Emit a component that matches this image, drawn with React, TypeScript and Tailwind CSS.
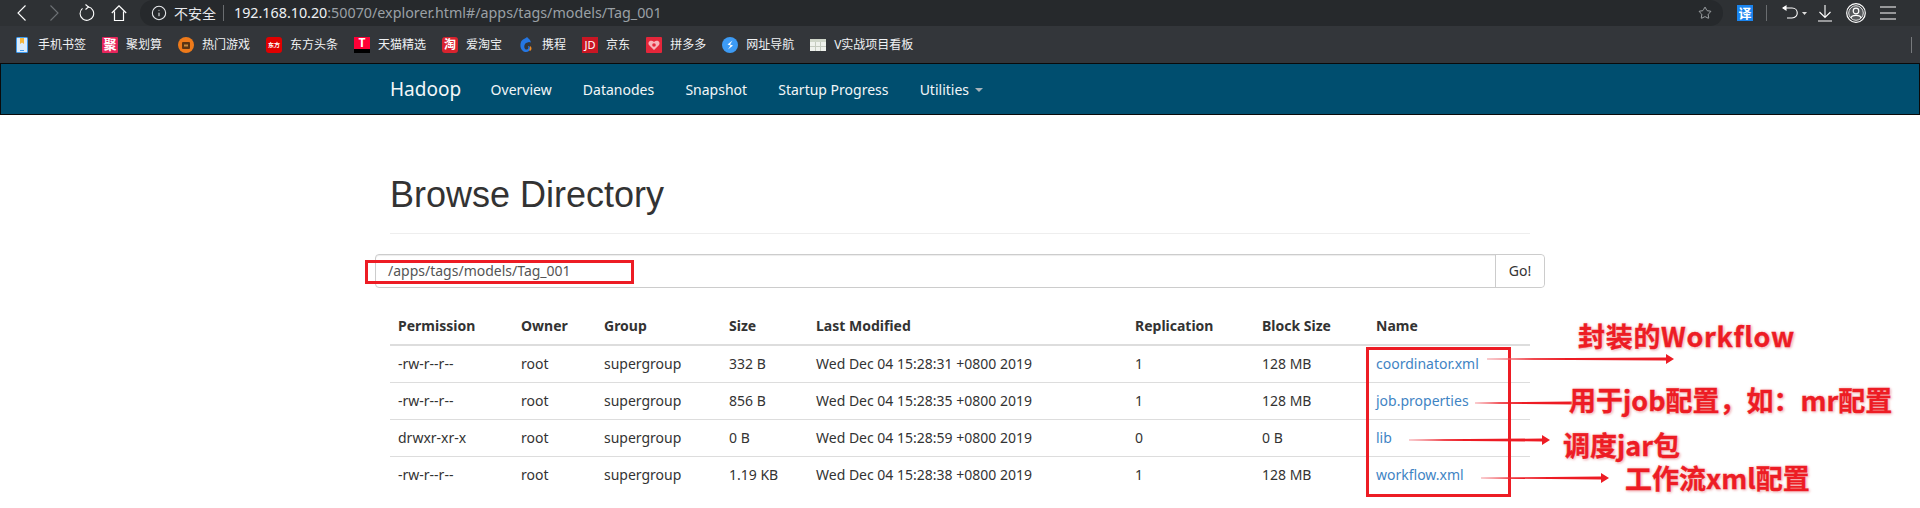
import React from 'react';
import { Star, Info } from 'lucide-react';

const FONT = 'font-["Noto_Sans","Noto_Sans_CJK_SC",sans-serif]';

const BookmarkIcon: React.FC<{ name: string }> = ({ name }) => {
  switch (name) {
    case 'phone':
      return (
        <svg width="16" height="16" viewBox="0 0 16 16">
          <rect x="2" y="0" width="12" height="16" rx="1.5" fill="#3f9bf0" />
          <rect x="3" y="1" width="10" height="14" fill="#dcebfa" />
          <path d="M6 1h4v6l-2-1.5L6 7z" fill="#f5b53a" />
          <rect x="6" y="13" width="4" height="1" fill="#3f9bf0" />
        </svg>
      );
    case 'ju':
      return <span className="flex h-4 w-4 items-center justify-center rounded-[1px] bg-[#e8255c] text-[13px] leading-none font-bold text-white">聚</span>;
    case 'game':
      return (
        <svg width="16" height="16" viewBox="0 0 16 16">
          <circle cx="8" cy="8" r="8" fill="#ee7a1a" />
          <rect x="4" y="5" width="8" height="7" rx="1" fill="#5a3413" />
          <rect x="6" y="7.5" width="4" height="2" fill="#c98a3c" />
        </svg>
      );
    case 'dongfang':
      return <span className="flex h-4 w-4 items-center justify-center rounded-[3px] bg-[#e00000] text-[6px] leading-none font-bold text-white">东方</span>;
    case 'tmall':
      return (
        <span className="flex h-4 w-4 flex-col bg-black">
          <span className="flex h-3 w-4 items-center justify-center bg-[#ff0036] text-[12px] leading-none font-bold text-white">T</span>
        </span>
      );
    case 'tao':
      return <span className="flex h-4 w-4 items-center justify-center rounded-[3px] bg-[#d9232e] text-[12px] leading-none font-bold text-white">淘</span>;
    case 'ctrip':
      return (
        <svg width="16" height="16" viewBox="0 0 16 16">
          <path d="M9 0c-1 1.500-5 2-6 5-1.500 4 0 9 4 10 3 .6 5-1.500 5-4 0-1.500-1-2-2-2 1 2 0 4-2 3.500C6 12 5.500 8 8 6l3-1 2 .5L12 3z" fill="#2577e3" />
          <path d="M12 9c2 1 2 4 0 5l-1-1c1-1 1-2 1-4z" fill="#f08a24" />
        </svg>
      );
    case 'jd':
      return <span className="flex h-4 w-4 items-center justify-center bg-[#c91623] text-[11px] leading-none text-white">JD</span>;
    case 'pdd':
      return (
        <svg width="16" height="16" viewBox="0 0 16 16">
          <rect width="16" height="16" rx="1" fill="#e5263a" />
          <path d="M8 13 3 8c-2-3 2-6 5-3 3-3 7 0 5 3z" fill="#f6b3ba" />
          <circle cx="8" cy="8" r="1.800" fill="#e5263a" />
        </svg>
      );
    case 'nav':
      return (
        <svg width="16" height="16" viewBox="0 0 16 16">
          <circle cx="8" cy="8" r="8" fill="#3d9bf5" />
          <path d="M10.500 3.500 5.500 7.500l3 1-2.500 4 5-4-3-1z" fill="#fff" />
        </svg>
      );
    default:
      return (
        <svg width="16" height="12" viewBox="0 0 16 12">
          <rect width="16" height="12" fill="#eef1ec" />
          <rect width="16" height="3" fill="#cfd6c9" />
          <path d="M5.500 3v9M10.500 3v9M0 7.500h16" stroke="#c4cabf" strokeWidth="1" />
        </svg>
      );
  }
};

const bookmarks = [
  { icon: 'phone', label: '手机书签' },
  { icon: 'ju', label: '聚划算' },
  { icon: 'game', label: '热门游戏' },
  { icon: 'dongfang', label: '东方头条' },
  { icon: 'tmall', label: '天猫精选' },
  { icon: 'tao', label: '爱淘宝' },
  { icon: 'ctrip', label: '携程' },
  { icon: 'jd', label: '京东' },
  { icon: 'pdd', label: '拼多多' },
  { icon: 'nav', label: '网址导航' },
  { icon: 'sheet', label: 'V实战项目看板' },
];

const rows = [
  { perm: '-rw-r--r--', size: '332 B', date: 'Wed Dec 04 15:28:31 +0800 2019', rep: '1', block: '128 MB', name: 'coordinator.xml' },
  { perm: '-rw-r--r--', size: '856 B', date: 'Wed Dec 04 15:28:35 +0800 2019', rep: '1', block: '128 MB', name: 'job.properties' },
  { perm: 'drwxr-xr-x', size: '0 B', date: 'Wed Dec 04 15:28:59 +0800 2019', rep: '0', block: '0 B', name: 'lib' },
  { perm: '-rw-r--r--', size: '1.19 KB', date: 'Wed Dec 04 15:28:38 +0800 2019', rep: '1', block: '128 MB', name: 'workflow.xml' },
];

const navLinks = ['Overview', 'Datanodes', 'Snapshot', 'Startup Progress'];

const Arrow: React.FC<{ x1: number; x2: number; y: number; head?: boolean }> = ({ x1, x2, y, head = true }) => (
  <path
    d={
      head
        ? `M${x1} ${y - 0.5} L${x2 - 8} ${y - 1.5} L${x2 - 8} ${y - 5} L${x2} ${y} L${x2 - 8} ${y + 5} L${x2 - 8} ${y + 1.5} L${x1} ${y + 0.5} Z`
        : `M${x1} ${y - 0.5} L${x2} ${y - 1.5} L${x2} ${y + 1.5} L${x1} ${y + 0.5} Z`
    }
    fill="url(#arrowFade)"
  />
);

const labelClass =
  'absolute text-[27px] leading-none font-bold whitespace-nowrap text-[#ed1c24] [-webkit-text-stroke:0.4px_#ed1c24] [text-shadow:0_0_2px_#fff,0_0_3px_#f4b8bb,1px_1px_3px_#e9a0a4] font-["Noto_Sans_CJK_SC",sans-serif]';

const App: React.FC = () => {
  return (
    <div className={`relative h-[508px] w-[1920px] overflow-hidden bg-white ${FONT}`}>
      {/* browser chrome */}
      <div className="flex h-[26px] bg-[#2e3134]">
        <div className="flex w-[140px] items-center pl-[17px] text-white">
          <svg width="9" height="16" viewBox="0 0 9 16" fill="none" stroke="#fff" strokeWidth="1.1">
            <path d="M8.500.5 1 8l7.500 7.500" />
          </svg>
          <svg width="9" height="16" viewBox="0 0 9 16" fill="none" stroke="#6e7276" strokeWidth="1.1" className="ml-[24px]">
            <path d="M.5.500 8 8 .5 15.500" />
          </svg>
          <svg width="16" height="18" viewBox="0 0 16 18" fill="none" stroke="#fff" strokeWidth="1.1" className="ml-[20px]">
            <path d="M9 2.800a6.800 6.800 0 1 1-5.500 1.500" />
            <path d="M6.500.5 9.500 3 6.500 5.500" />
          </svg>
          <svg width="16" height="16" viewBox="0 0 16 16" className="ml-[16px]" fill="none" stroke="#fff" strokeWidth="1.2">
            <path d="M.8 8 8 .8 15.200 8M3.500 6.500v9h9v-9" />
          </svg>
        </div>
        <div className="flex w-[1583px] items-center rounded-[13px] bg-[#26292c] pl-[11px]">
          <Info size={16} strokeWidth={1.6} className="text-[#e8eaed]" />
          <span className="ml-[7px] text-[14px] text-[#e8eaed]">不安全</span>
          <span className="ml-[7px] h-[16px] w-px bg-[#6a6d70]" />
          <span className="ml-[10px] text-[14.300px] text-[#9aa0a6]">
            <span className="text-[#eef1f4]">192.168.10.20</span>:50070/explorer.html#/apps/tags/models/Tag_001
          </span>
          <Star size={14} strokeWidth={1.3} className="mr-[11px] ml-auto text-[#c4c7ca]" />
        </div>
        <div className="flex flex-1 items-center pl-[14px] text-white">
          <span className="flex h-4 w-4 items-center justify-center bg-[#1a84ee] text-[13px] leading-none font-bold">译</span>
          <span className="ml-[13px] h-4 w-px bg-[#6a6d70]" />
          <svg width="28" height="18" viewBox="0 0 28 18" className="ml-[15px]" fill="none" stroke="#fff" strokeWidth="1.1">
            <path d="M1 4h9c7 0 7 10 0 10H5" />
            <path d="M1 4 4 2v4z" fill="#fff" />
            <path d="M20 8h5l-2.500 3z" fill="#ddd" stroke="none" />
          </svg>
          <svg width="16" height="18" viewBox="0 0 16 18" className="ml-[7px]" fill="none" stroke="#fff" strokeWidth="1.1">
            <path d="M8 1v12M2.500 8 8 13.500 13.500 8M1 17h14" />
          </svg>
          <svg width="20" height="20" viewBox="0 0 20 20" className="ml-[13px]" fill="none">
            <circle cx="10" cy="10" r="9.300" stroke="#fff" strokeWidth="1.200" />
            <circle cx="10" cy="10" r="7.300" fill="#55585b" stroke="#e8e8e8" strokeWidth="1" />
            <circle cx="10" cy="8" r="2.800" stroke="#fff" strokeWidth="1.200" />
            <path d="M5 15c.5-3.500 9.500-3.500 10 0" stroke="#fff" strokeWidth="1.200" />
          </svg>
          <svg width="16" height="14" viewBox="0 0 16 14" className="ml-[14px]" stroke="#fff" strokeWidth="1.100">
            <path d="M0 1h16M0 7h16M0 13h16" />
          </svg>
        </div>
      </div>
      <div className="flex h-[37px] items-center bg-[#33363a] pl-[14px] text-[12px] text-[#f0f2f4]">
        <div className="flex gap-4">
          {bookmarks.map((b) => (
            <div key={b.label} className="flex items-center gap-2">
              <span className="flex h-4 w-4 items-center justify-center">
                <BookmarkIcon name={b.icon} />
              </span>
              <span className="leading-4">{b.label}</span>
            </div>
          ))}
        </div>
        <span className="mr-2 ml-auto h-4 w-px bg-[#777a7d]" />
      </div>

      {/* navbar */}
      <nav className="h-[52px] border border-[#0a0a0a] bg-[#004e6f]">
        <div className="mx-auto flex h-[50px] w-[1170px] items-center pl-[15px] text-[14px] text-[#f2f6f8]">
          <span className="w-[85px] text-[19px]">Hadoop</span>
          <div className="flex">
            {navLinks.map((link) => (
              <a key={link} className="px-[15.600px]">{link}</a>
            ))}
            <a className="flex items-center gap-[6px] px-[15.600px]">
              Utilities
              <span className="mt-px h-0 w-0 border-x-4 border-t-4 border-x-transparent border-t-[#a8b3ba]" />
            </a>
          </div>
        </div>
      </nav>

      {/* page body */}
      <div className="mx-auto w-[1170px] text-[14px] leading-5 text-[#333]">
        <div className="mx-[15px] mt-[39px] border-b border-[#eee] pt-[21px] pb-[18px]">
          <h1 className='font-["Liberation_Sans",sans-serif] text-[36px] leading-10 font-normal'>Browse Directory</h1>
        </div>
        <div className="mt-5 flex h-[34px] rounded-[4px] border border-[#ccc] shadow-[inset_0_1px_1px_rgba(0,0,0,0.075)]">
          <div className="flex flex-1 items-center pl-3 text-[#555]">/apps/tags/models/Tag_001</div>
          <button className="w-[49px] rounded-r-[4px] border-l border-[#ccc] bg-white text-center text-[#333]">Go!</button>
        </div>
        <table className="mx-[15px] mt-5 w-[1140px] table-fixed">
          <colgroup>
            <col className="w-[123px]" />
            <col className="w-[83px]" />
            <col className="w-[125px]" />
            <col className="w-[87px]" />
            <col className="w-[319px]" />
            <col className="w-[127px]" />
            <col className="w-[114px]" />
            <col className="w-[162px]" />
          </colgroup>
          <thead>
            <tr className="border-b-2 border-[#ddd] text-left">
              {['Permission', 'Owner', 'Group', 'Size', 'Last Modified', 'Replication', 'Block Size', 'Name'].map((h) => (
                <th key={h} className="p-2 font-bold">{h}</th>
              ))}
            </tr>
          </thead>
          <tbody>
            {rows.map((r, i) => (
              <tr key={r.name} className={i < rows.length - 1 ? 'border-b border-[#ddd]' : ''}>
                <td className="p-2">{r.perm}</td>
                <td className="p-2">root</td>
                <td className="p-2">supergroup</td>
                <td className="p-2">{r.size}</td>
                <td className="p-2">{r.date}</td>
                <td className="p-2">{r.rep}</td>
                <td className="p-2">{r.block}</td>
                <td className="p-2 text-[#3f84c4]">{r.name}</td>
              </tr>
            ))}
          </tbody>
        </table>
      </div>

      {/* red annotations pasted on top of the screenshot */}
      <svg className="pointer-events-none absolute inset-0" width="1920" height="508" viewBox="0 0 1920 508">
        <defs>
          <linearGradient id="arrowFade" x1="0" x2="1" y1="0" y2="0">
            <stop offset="0" stopColor="#f59aa0" />
            <stop offset="0.25" stopColor="#ed1c24" />
          </linearGradient>
        </defs>
        <rect x="366.500" y="261.500" width="266" height="21" fill="none" stroke="#ed1c24" strokeWidth="3" />
        <rect x="1367.500" y="348.500" width="142" height="147" fill="none" stroke="#ed1c24" strokeWidth="3" />
        <Arrow x1={1487} x2={1674} y={359} />
        <Arrow x1={1475} x2={1572} y={403} head={false} />
        <Arrow x1={1409} x2={1550} y={440} />
        <Arrow x1={1481} x2={1609} y={478} />
      </svg>
      <span className={`${labelClass} left-[1578px] top-[322px] tracking-[0.7px]`}>封装的Workflow</span>
      <span className={`${labelClass} left-[1569px] top-[386px]`}>用于job配置，如：mr配置</span>
      <span className={`${labelClass} left-[1563px] top-[431px]`}>调度jar包</span>
      <span className={`${labelClass} left-[1625px] top-[464px]`}>工作流xml配置</span>
    </div>
  );
};

export default App;
